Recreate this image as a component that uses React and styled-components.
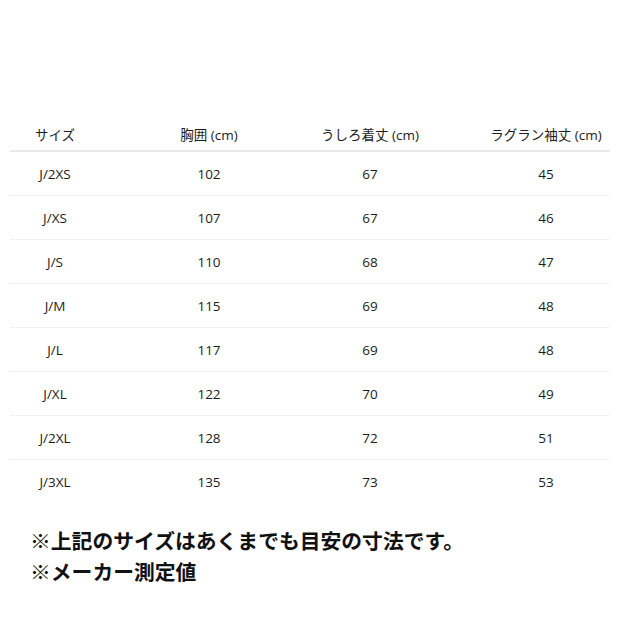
import React from "react";
import styled, { createGlobalStyle } from "styled-components";

const rows = [
	["J/2XS", "102", "67", "45"],
	["J/XS", "107", "67", "46"],
	["J/S", "110", "68", "47"],
	["J/M", "115", "69", "48"],
	["J/L", "117", "69", "48"],
	["J/XL", "122", "70", "49"],
	["J/2XL", "128", "72", "51"],
	["J/3XL", "135", "73", "53"],
];

const heads = ["サイズ", "胸囲 (cm)", "うしろ着丈 (cm)", "ラグラン袖丈 (cm)"];

const App = () => {
	return (
		<Page>
			<Global />
			<Table>
				<HeadRow>
					{heads.map((h, i) => (
						<Cell key={h} $last={i === 3}>
							{h}
						</Cell>
					))}
				</HeadRow>
				{rows.map((r, ri) => (
					<Row key={r[0]} $noLine={ri === rows.length - 1}>
						{r.map((v, i) => (
							<Cell key={i} $last={i === 3}>
								{v}
							</Cell>
						))}
					</Row>
				))}
			</Table>
			<Notes>
				<Note>※上記のサイズはあくまでも目安の寸法です。</Note>
				<Note>※メーカー測定値</Note>
			</Notes>
		</Page>
	);
};

export default App;

const Global = createGlobalStyle`
	body {
		margin: 0;
		background: #fff;
	}
`;

const Page = styled.div`
	width: 620px;
	height: 620px;
	padding: 118px 10px 0;
	box-sizing: border-box;
	background: #fff;
`;

const Table = styled.div`
	display: flex;
	flex-direction: column;
	font-family: "Open Sans", "Noto Sans CJK JP", sans-serif;
	font-size: 13.5px;
	color: #1c1c1c;
`;

const HeadRow = styled.div`
	display: grid;
	grid-template-columns: 90px 218px 104px 1fr;
	align-items: center;
	height: 32px;
	border-bottom: 2px solid #e9e9e9;
`;

const Row = styled.div`
	display: grid;
	grid-template-columns: 90px 218px 104px 1fr;
	align-items: center;
	height: 43px;
	border-bottom: 1px solid ${({ $noLine }) => ($noLine ? "transparent" : "#f1f1f1")};
`;

const Cell = styled.div`
	text-align: center;
	white-space: nowrap;
	padding-left: ${({ $last }) => ($last ? "60px" : "0")};
`;

const Notes = styled.div`
	margin: 21px 0 0 20px;
	font-family: "Noto Sans CJK JP", sans-serif;
	font-weight: 700;
	font-size: 20.8px;
	line-height: 31px;
	color: #111;
`;

const Note = styled.div``;
